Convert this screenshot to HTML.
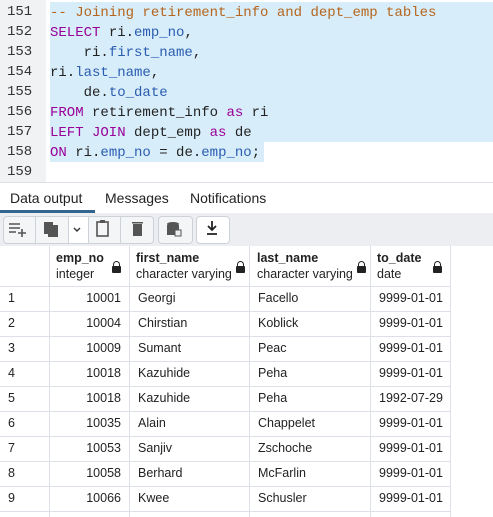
<html><head><style>
body{margin:0;width:493px;height:517px;overflow:hidden;background:#fff;position:relative;font-family:"Liberation Sans",sans-serif}
.g{position:absolute;left:0;top:0;width:46px;height:182px;background:#f1f2f4}
.ln{position:absolute;left:7px;font:14px "Liberation Mono",monospace;color:#333}
.cl{position:absolute;left:50px;font:14px/20px "Liberation Mono",monospace;color:#222;white-space:pre}
.sel{position:absolute;background:#d8edfa}
.k{color:#990099}.c{color:#b5651d}.f{color:#2a5db0}
.tabs{position:absolute;top:182px;left:0;width:493px;height:30px;border-top:1px solid #dde0e6;border-bottom:1px solid #dde0e6;font-size:14px;color:#222}
.tabs span{position:absolute;top:7px}
.tb{position:absolute;top:213px;left:0;width:493px;height:33px;background:#eceef2}
.bt{position:absolute;top:3px;height:26px;background:#f4f5f7;border:1px solid #cdd1d8;border-radius:4px}
.v{position:absolute;top:246px;width:1px;height:271px;background:#dde0e6}
.h{position:absolute;left:0;width:451px;height:1px;background:#dde0e6}
.t{position:absolute;font-size:12.5px;color:#222}
.hd{font-weight:bold}
.lk{position:absolute;width:9px;height:7px;background:#222;border-radius:1px}
.lk:before{content:"";position:absolute;left:1px;top:-5px;width:5px;height:5px;border:1.5px solid #222;border-bottom:none;border-radius:4px 4px 0 0}
</style></head><body>
<div class="g"></div>
<div class="sel" style="left:50px;top:2px;width:443px;height:140px"></div>
<div class="sel" style="left:50px;top:142px;width:214px;height:20px"></div>
<div class="ln" style="top:4px">151</div><div class="ln" style="top:24px">152</div><div class="ln" style="top:44px">153</div><div class="ln" style="top:64px">154</div><div class="ln" style="top:84px">155</div><div class="ln" style="top:104px">156</div><div class="ln" style="top:124px">157</div><div class="ln" style="top:144px">158</div><div class="ln" style="top:164px">159</div>
<div class="cl" style="top:3px"><span class="c">-- Joining retirement_info and dept_emp tables</span></div>
<div class="cl" style="top:23px"><span class="k">SELECT</span> ri.<span class="f">emp_no</span>,</div>
<div class="cl" style="top:43px">    ri.<span class="f">first_name</span>,</div>
<div class="cl" style="top:63px">ri.<span class="f">last_name</span>,</div>
<div class="cl" style="top:83px">    de.<span class="f">to_date</span></div>
<div class="cl" style="top:103px"><span class="k">FROM</span> retirement_info <span class="k">as</span> ri</div>
<div class="cl" style="top:123px"><span class="k">LEFT JOIN</span> dept_emp <span class="k">as</span> de</div>
<div class="cl" style="top:143px"><span class="k">ON</span> ri.<span class="f">emp_no</span> = de.<span class="f">emp_no</span>;</div>
<div class="tabs"><span style="left:10px">Data output</span><span style="left:105px">Messages</span><span style="left:190px">Notifications</span>
<div style="position:absolute;left:0;top:27px;width:95px;height:3px;background:#326690"></div></div>
<div class="tb">
<div class="bt" style="left:3px;width:149px"></div>
<div style="position:absolute;left:35px;top:4px;width:1px;height:26px;background:#cdd1d8"></div>
<div style="position:absolute;left:68px;top:4px;width:19px;height:26px;background:#fff;border-left:1px solid #cdd1d8;border-right:1px solid #cdd1d8"></div>
<div style="position:absolute;left:120px;top:4px;width:1px;height:26px;background:#cdd1d8"></div>
<div class="bt" style="left:158px;width:33px"></div>
<div class="bt" style="left:196px;width:32px;background:#fff"></div>
<svg style="position:absolute;left:0;top:0" width="240" height="33" fill="#555" stroke="#555">
<path d="M9 11h11M9 15h11M9 19h7M22 16v8M18 20h8" stroke-width="1.6" fill="none"/>
<rect x="44" y="9" width="9" height="12" stroke="none"/><rect x="48" y="12" width="10" height="12" stroke="none"/>
<path d="M74 15l3 3 3-3" fill="none" stroke="#333" stroke-width="1.4"/>
<rect x="97" y="9" width="11" height="14" fill="none" stroke-width="1.6"/><rect x="100" y="7" width="5" height="3" stroke="none"/>
<rect x="133" y="11" width="9" height="12" stroke="none"/><rect x="132" y="9" width="11" height="1.5" stroke="none"/>
<ellipse cx="173" cy="11" rx="6" ry="2" stroke="none"/><rect x="167" y="12" width="12" height="10" stroke="none"/><rect x="175" y="17" width="6" height="6" fill="#eee" stroke="#555"/>
<path d="M212 8v9M208 13l4 4 4-4M207 21h10" stroke="#222" stroke-width="1.8" fill="none"/>
</svg></div>
<div class="v" style="left:49px"></div><div class="v" style="left:129px"></div><div class="v" style="left:249px"></div><div class="v" style="left:370px"></div><div class="v" style="left:450px"></div>
<div class="h" style="top:286px"></div><div class="h" style="top:311px"></div><div class="h" style="top:336px"></div><div class="h" style="top:361px"></div><div class="h" style="top:386px"></div><div class="h" style="top:411px"></div><div class="h" style="top:436px"></div><div class="h" style="top:461px"></div><div class="h" style="top:486px"></div><div class="h" style="top:511px"></div>
<div class="t hd" style="left:56px;top:251px">emp_no</div><div class="t" style="left:56px;top:267px">integer</div><div class="lk" style="left:112px;top:266px"></div>
<div class="t hd" style="left:136px;top:251px">first_name</div><div class="t" style="left:136px;top:267px">character varying</div><div class="lk" style="left:236px;top:266px"></div>
<div class="t hd" style="left:257px;top:251px">last_name</div><div class="t" style="left:257px;top:267px">character varying</div><div class="lk" style="left:357px;top:266px"></div>
<div class="t hd" style="left:377px;top:251px">to_date</div><div class="t" style="left:377px;top:267px">date</div><div class="lk" style="left:433px;top:266px"></div>
<div id="rows"></div>
<script>
var d=[["10001","Georgi","Facello","9999-01-01"],["10004","Chirstian","Koblick","9999-01-01"],["10009","Sumant","Peac","9999-01-01"],["10018","Kazuhide","Peha","9999-01-01"],["10018","Kazuhide","Peha","1992-07-29"],["10035","Alain","Chappelet","9999-01-01"],["10053","Sanjiv","Zschoche","9999-01-01"],["10058","Berhard","McFarlin","9999-01-01"],["10066","Kwee","Schusler","9999-01-01"]];
var h="";d.forEach(function(r,i){var y=291+i*25;h+='<div class="t" style="left:8px;top:'+y+'px">'+(i+1)+'</div><div class="t" style="left:60px;width:61px;text-align:right;top:'+y+'px">'+r[0]+'</div><div class="t" style="left:138px;top:'+y+'px">'+r[1]+'</div><div class="t" style="left:258px;top:'+y+'px">'+r[2]+'</div><div class="t" style="left:379px;top:'+y+'px">'+r[3]+'</div>';});
document.getElementById("rows").innerHTML=h;
</script>
</body></html>
